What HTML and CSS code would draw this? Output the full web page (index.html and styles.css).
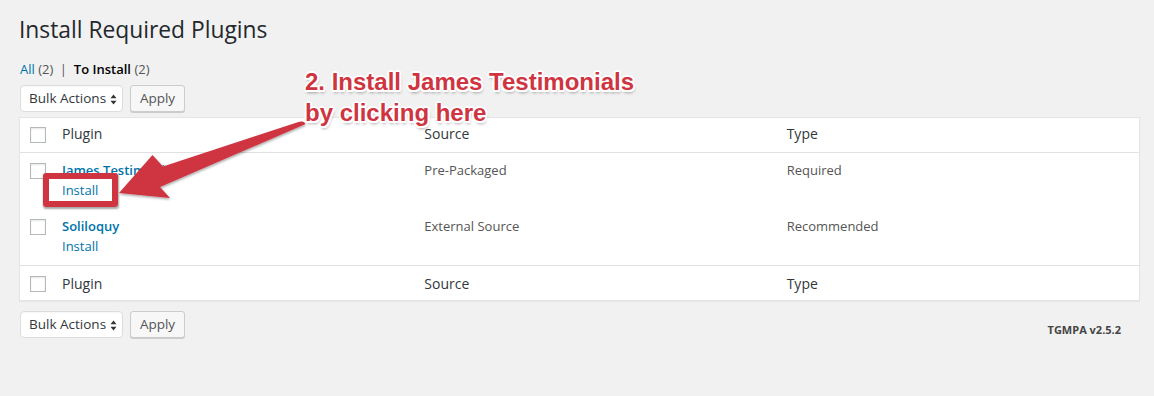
FILE: index.html
```html
<!DOCTYPE html>
<html>
<head>
<meta charset="utf-8">
<title>Install Required Plugins</title>
<link rel="stylesheet" href="styles.css">
</head>
<body>
<div class="wrap">
  <h1 class="title">Install Required Plugins</h1>
  <ul class="subsubsub">
    <li><a class="link" href="#">All</a> <span class="count">(2)</span> <span class="sep">|</span></li>
    <li><span class="current">To Install</span> <span class="count">(2)</span></li>
  </ul>
  <div class="tablenav top">
    <div class="select">Bulk Actions
      <svg class="updown" width="7" height="11" viewBox="0 0 7 11"><path d="M3.5 0.5 L6.5 4.2 H0.5 Z M3.5 10.5 L6.5 6.8 H0.5 Z" fill="#333"/></svg>
    </div>
    <button class="button">Apply</button>
  </div>
  <table class="plugins">
    <colgroup><col class="c-check"><col><col><col></colgroup>
    <thead>
      <tr><th class="check"><span class="cb"></span></th><th>Plugin</th><th>Source</th><th>Type</th></tr>
    </thead>
    <tbody>
      <tr>
        <td class="check"><span class="cb"></span></td>
        <td><a class="name" href="#">James Testimonials</a><div class="actions"><a class="link" href="#">Install</a></div></td>
        <td>Pre-Packaged</td>
        <td>Required</td>
      </tr>
      <tr>
        <td class="check"><span class="cb"></span></td>
        <td><a class="name" href="#">Soliloquy</a><div class="actions"><a class="link" href="#">Install</a></div></td>
        <td>External Source</td>
        <td>Recommended</td>
      </tr>
    </tbody>
    <tfoot>
      <tr><th class="check"><span class="cb"></span></th><th>Plugin</th><th>Source</th><th>Type</th></tr>
    </tfoot>
  </table>
  <div class="tablenav bottom">
    <div class="select">Bulk Actions
      <svg class="updown" width="7" height="11" viewBox="0 0 7 11"><path d="M3.5 0.5 L6.5 4.2 H0.5 Z M3.5 10.5 L6.5 6.8 H0.5 Z" fill="#333"/></svg>
    </div>
    <button class="button">Apply</button>
    <p class="version">TGMPA v2.5.2</p>
  </div>
</div>

<div class="callout">2. Install James Testimonials<br>by clicking here</div>
<div class="highlight"></div>
<svg class="arrow" width="1154" height="396" viewBox="0 0 1154 396">
  <defs>
    <filter id="sh" x="-20%" y="-20%" width="140%" height="140%">
      <feDropShadow dx="0.5" dy="1.5" stdDeviation="1.2" flood-color="#000" flood-opacity="0.35"/>
    </filter>
  </defs>
  <path filter="url(#sh)" fill="#cf3441" d="M119 193 L152.5 155 L163 166.5 L298.5 122 Q304 120.5 305.5 124 L160 187 L170 198 Z"/>
</svg>
</body>
</html>
```

FILE: styles.css
```css
html, body {
  margin: 0;
  padding: 0;
  background: #f1f1f1;
}
body {
  font-family: "Open Sans", "Noto Sans", sans-serif;
  font-size: 13px;
  color: #444;
  width: 1154px;
  height: 396px;
  overflow: hidden;
  position: relative;
}
.wrap {
  padding: 0 0 0 19px;
}
.title {
  margin: 0;
  padding: 15px 0 0 0;
  font-size: 22.8px;
  font-weight: 400;
  line-height: 29px;
  color: #23282d;
}
.subsubsub {
  list-style: none;
  margin: 12px 0 0 1px;
  padding: 0;
  display: flex;
  font-size: 13px;
  line-height: 26px;
  color: #666;
}
.subsubsub li {
  white-space: pre;
}
.link {
  color: #0073aa;
  text-decoration: none;
}
.count {
  color: #555;
}
.sep {
  color: #555;
  margin: 0 7px 0 3px;
}
.current {
  color: #000;
  font-weight: 600;
}
.tablenav {
  display: flex;
  align-items: flex-start;
  gap: 7px;
  height: 28px;
  margin: 3px 0 4px 1px;
}
.tablenav.bottom {
  margin: 10px 0 0 1px;
  width: 1101px;
}
.select {
  box-sizing: border-box;
  height: 27px;
  width: 103px;
  padding: 0 5px 0 8px;
  background: #fff;
  border: 1px solid #ddd;
  border-radius: 4px;
  box-shadow: inset 0 1px 2px rgba(0,0,0,.04);
  display: flex;
  align-items: center;
  justify-content: space-between;
  font-size: 13.5px;
  color: #32373c;
  line-height: 25px;
}
.updown {
  display: block;
  margin-top: 1px;
}
.button {
  box-sizing: border-box;
  height: 27px;
  width: 55px;
  padding: 0;
  margin: 0;
  font-family: inherit;
  font-size: 13.5px;
  color: #555;
  background: #f7f7f7;
  border: 1px solid #ccc;
  border-radius: 3px;
  box-shadow: 0 1px 0 #ccc;
  line-height: 25px;
}
.version {
  margin: 11px 0 0 auto;
  font-size: 11px;
  font-weight: 700;
  color: #444;
  line-height: 16px;
}
.plugins {
  box-sizing: border-box;
  width: 1121px;
  border-collapse: separate;
  border-spacing: 0;
  table-layout: fixed;
  background: #fff;
  border: 1px solid #e5e5e5;
  box-shadow: 0 1px 1px rgba(0,0,0,.04);
}
.c-check {
  width: 32px;
}
.plugins th {
  text-align: left;
  font-weight: 400;
  font-size: 14px;
  line-height: 20px;
  color: #32373c;
  padding: 6px 10px 8px;
  height: 20px;
}
.plugins thead th {
  border-bottom: 1px solid #e1e1e1;
}
.plugins tfoot th {
  border-top: 1px solid #e1e1e1;
  padding: 8px 10px 6px;
}
.plugins td {
  vertical-align: top;
  padding: 7px 10px 9px;
  font-size: 13px;
  line-height: 20px;
  color: #555;
  height: 40px;
}
.plugins .check {
  padding: 0 0 0 10px;
  vertical-align: top;
}
.cb {
  display: block;
  box-sizing: border-box;
  width: 16px;
  height: 16px;
  border: 1px solid #b4b9be;
  background: #fff;
  box-shadow: inset 0 1px 2px rgba(0,0,0,.1);
}
.plugins th.check .cb {
  margin-top: 9px;
}
.plugins tfoot th.check .cb {
  margin-top: 10px;
}
.plugins td.check .cb {
  margin-top: 10px;
}
.name {
  color: #0073aa;
  font-weight: 600;
  text-decoration: none;
}
.actions {
  line-height: 20px;
}

/* annotation overlay */
.callout {
  position: absolute;
  left: 305px;
  top: 66px;
  font-family: "Liberation Sans", Arial, sans-serif;
  font-weight: 700;
  font-size: 24px;
  line-height: 31px;
  color: #cf3441;
  white-space: nowrap;
  text-shadow:
    -1.5px -1.5px 0 #fff, 1.5px -1.5px 0 #fff, -1.5px 1.5px 0 #fff, 1.5px 1.5px 0 #fff,
    0 -2px 0 #fff, 0 2px 0 #fff, -2px 0 0 #fff, 2px 0 0 #fff,
    1px 3px 3px rgba(0,0,0,.35);
}
.highlight {
  position: absolute;
  left: 43px;
  top: 173px;
  width: 75px;
  height: 34px;
  box-sizing: border-box;
  border: 6px solid #cf3441;
  border-radius: 3px;
  box-shadow: 0.5px 1.5px 2px rgba(0,0,0,.35);
}
.arrow {
  position: absolute;
  left: 0;
  top: 0;
  pointer-events: none;
}
```
